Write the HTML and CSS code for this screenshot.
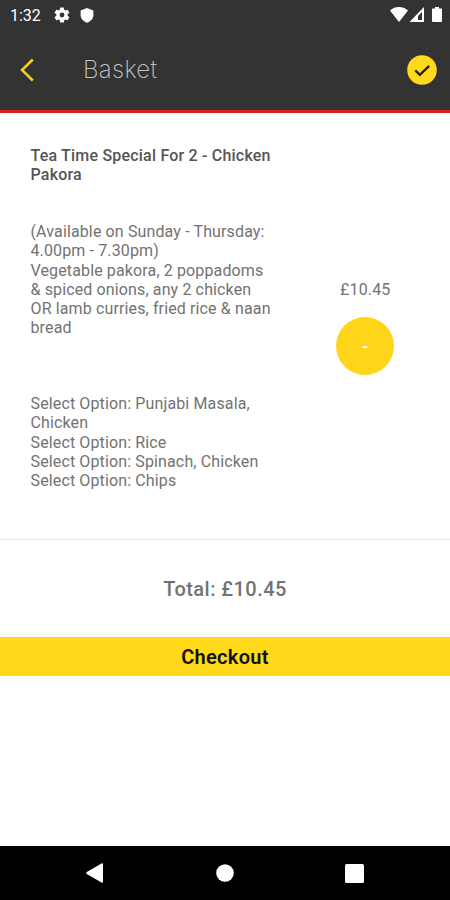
FILE: index.html
```
<!doctype html>
<html lang="en">
<head>
    <meta charset="UTF-8">
    <title>Basket</title>
    <link rel="stylesheet" href="styles.css">
</head>
<body>
    <div class="app">
        <div class="statusBar">
            <span class="time">1:32</span>
            <svg class="gear" width="18" height="18" viewBox="0 0 24 24"><path fill="#fff" fill-rule="evenodd" d="M19.4 13c.1-.3.1-.6.1-1s0-.7-.1-1l2.1-1.600c.2-.2.3-.4.1-.7l-2-3.400c-.1-.2-.4-.3-.6-.2l-2.500 1c-.5-.4-1.100-.7-1.700-1l-.4-2.600c0-.3-.2-.5-.5-.5h-4c-.3 0-.5.2-.5.5L9 5.100c-.6.3-1.200.6-1.700 1l-2.500-1c-.2-.1-.5 0-.6.2l-2 3.400c-.1.3 0 .5.2.7L4.500 11c-.1.3-.1.700-.1 1s0 .7.1 1l-2.100 1.600c-.2.2-.3.500-.2.700l2 3.400c.1.2.4.3.6.2l2.500-1c.5.4 1.100.8 1.700 1l.4 2.600c0 .3.3.5.6.5h4c.3 0 .5-.2.5-.5l.4-2.600c.6-.2 1.200-.6 1.700-1l2.500 1c.2.1.5 0 .6-.2l2-3.400c.1-.2.1-.5-.1-.7zM12 15.200a3.200 3.200 0 1 1 0-6.400 3.200 3.200 0 0 1 0 6.400z"/></svg>
            <svg class="shield" width="16" height="17" viewBox="0 0 14 16"><path fill="#fff" d="M7 1l6 2.300v4.200c0 3.300-2.500 6-6 7.300-3.500-1.300-6-4-6-7.300V3.300z"/></svg>
            <svg class="signals" width="52" height="18" viewBox="0 0 52 18"><path fill="#fff" d="M0 4.500C5-.1 13-.1 18 4.500L9 16zM34 1v15H19.500z"/><path fill="#333" d="M32 6v8h-4V10z"/><path fill="#fff" d="M42.500 2.500H45V1h4v1.500h2.500q.5 0 .5 1V15q0 1-1 1h-8q-1 0-1-1V3.500q0-1 .5-1z"/></svg>
        </div>
        <div class="header">
            <svg class="back" width="14" height="24" viewBox="0 0 14 24"><path fill="none" stroke="#f5d020" stroke-width="2.500" d="M12.800 1.500L2 12l10.800 10.500"/></svg>
            <h1>Basket</h1>
            <svg class="tick" width="30" height="30" viewBox="0 0 30 30"><circle cx="15" cy="15" r="14.800" fill="#ffd91c"/><path fill="none" stroke="#222" stroke-width="2.300" d="M8.200 15.200l4.600 4.600 9.400-9"/></svg>
        </div>
        <div class="item">
            <div class="details">
                <h2>Tea Time Special For 2 - Chicken Pakora</h2>
                <p>(Available on Sunday - Thursday:<br>4.00pm - 7.30pm)<br>Vegetable pakora, 2 poppadoms<br>&amp; spiced onions, any 2 chicken<br>OR lamb curries, fried rice &amp; naan<br>bread</p>
                <p class="options">Select Option: Punjabi Masala,<br>Chicken<br>Select Option: Rice<br>Select Option: Spinach, Chicken<br>Select Option: Chips</p>
            </div>
            <div class="price">
                <span>£10.45</span>
                <button class="remove">-</button>
            </div>
        </div>
        <div class="total">Total: £10.45</div>
        <button class="checkout">Checkout</button>
        <div class="navBar">
            <svg width="18" height="20" viewBox="0 0 18 20"><path fill="#fff" d="M15.500.4q1.500-.8 1.500.8v17.600q0 1.600-1.500.8L.8 11q-1.300-1 0-2z"/></svg>
            <svg width="18" height="18" viewBox="0 0 18 18"><circle cx="9" cy="9" r="8.800" fill="#fff"/></svg>
            <svg width="19" height="19" viewBox="0 0 19 19"><rect width="19" height="19" rx="1.500" fill="#fff"/></svg>
        </div>
    </div>
</body>
</html>
```
FILE: styles.css
```
body{
    margin: 0;
    background-color: #fff;
    font-family: Roboto, "Liberation Sans", sans-serif;
    color: #727272;
}
h1,h2,p{
    margin: 0;
}
button{
    border: 0;
    padding: 0;
    font-family: inherit;
}
svg{
    display: block;
    flex: none;
}
.app{
    display: flex;
    flex-direction: column;
    height: 900px;
}
.statusBar{
    display: flex;
    align-items: center;
    height: 30px;
    padding: 0 8px 0 10px;
    background-color: #333;
    color: #fff;
}
.time{
    width: 43px;
    font-size: 16px;
}
.shield{
    margin-left: 8px;
}
.signals{
    margin-left: auto;
}
.header{
    display: flex;
    align-items: center;
    box-sizing: border-box;
    height: 83px;
    padding: 0 13px 1px 20px;
    background-color: #333;
    border-bottom: 3px solid #d91e1e;
}
h1{
    margin-left: 49px;
    font-family: Inter, sans-serif;
    font-size: 24px;
    font-weight: 200;
    letter-spacing: .3px;
    color: #c4c4c4;
}
.tick{
    margin-left: auto;
}
.item{
    display: flex;
    box-sizing: border-box;
    height: 427px;
    padding: 33px 27px 0 30.5px;
    border-bottom: 1px solid #e8e8e8;
    font-size: 16px;
    line-height: 19.15px;
    letter-spacing: .13px;
}
.details{
    width: 250px;
}
h2{
    font-size: 16px;
    font-weight: 500;
    letter-spacing: .2px;
    color: #555;
    margin-bottom: 38px;
}
.options{
    margin-top: 57px;
}
.price{
    display: flex;
    flex: 1;
    flex-direction: column;
    align-items: center;
    margin-top: 134px;
    margin-left: 27px;
}
.remove{
    width: 58px;
    height: 58px;
    margin-top: 18px;
    border-radius: 50%;
    background-color: #ffd51a;
    color: #fff;
    font-size: 16px;
    font-weight: 700;
}
.total{
    padding: 37px 0 35px;
    text-align: center;
    font-size: 20px;
    line-height: 25px;
    font-weight: 500;
    letter-spacing: .45px;
}
.checkout{
    height: 39px;
    background-color: #ffd91a;
    color: #111;
    font-size: 20px;
    font-weight: 600;
    letter-spacing: .3px;
}
.navBar{
    display: flex;
    align-items: center;
    justify-content: space-between;
    box-sizing: border-box;
    height: 54px;
    margin-top: auto;
    padding: 0 86px;
    background-color: #000;
}
```
